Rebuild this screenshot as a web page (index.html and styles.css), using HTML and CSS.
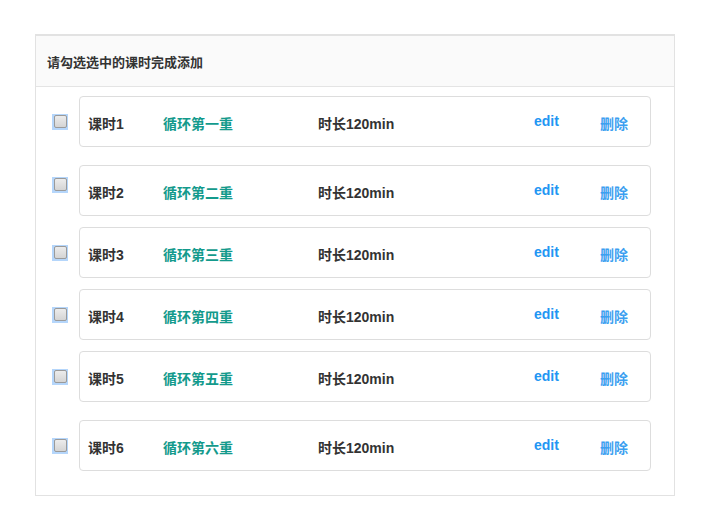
FILE: index.html
```html
<!DOCTYPE html>
<html>
<head>
<meta charset="utf-8">
<link rel="stylesheet" href="styles.css">
</head>
<body>
<div class="panel">
  <div class="panel-heading">请勾选选中的课时完成添加</div>
  <div class="panel-body">
    <div class="row">
      <span class="check"><span class="box"></span></span>
      <div class="card">
        <span class="c-label">课时1</span><span class="c-name">循环第一重</span><span class="c-dur">时长120min</span><a class="c-edit">edit</a><a class="c-del">删除</a>
      </div>
    </div>
    <div class="row spaced">
      <span class="check raised"><span class="box"></span></span>
      <div class="card">
        <span class="c-label">课时2</span><span class="c-name">循环第二重</span><span class="c-dur">时长120min</span><a class="c-edit">edit</a><a class="c-del">删除</a>
      </div>
    </div>
    <div class="row">
      <span class="check"><span class="box"></span></span>
      <div class="card">
        <span class="c-label">课时3</span><span class="c-name">循环第三重</span><span class="c-dur">时长120min</span><a class="c-edit">edit</a><a class="c-del">删除</a>
      </div>
    </div>
    <div class="row">
      <span class="check"><span class="box"></span></span>
      <div class="card">
        <span class="c-label">课时4</span><span class="c-name">循环第四重</span><span class="c-dur">时长120min</span><a class="c-edit">edit</a><a class="c-del">删除</a>
      </div>
    </div>
    <div class="row">
      <span class="check"><span class="box"></span></span>
      <div class="card">
        <span class="c-label">课时5</span><span class="c-name">循环第五重</span><span class="c-dur">时长120min</span><a class="c-edit">edit</a><a class="c-del">删除</a>
      </div>
    </div>
    <div class="row spaced">
      <span class="check"><span class="box"></span></span>
      <div class="card">
        <span class="c-label">课时6</span><span class="c-name">循环第六重</span><span class="c-dur">时长120min</span><a class="c-edit">edit</a><a class="c-del">删除</a>
      </div>
    </div>
  </div>
</div>
</body>
</html>
```
FILE: styles.css
```css
html, body {
  margin: 0;
  padding: 0;
  background: #fff;
}
body {
  font-family: "Liberation Sans", Arial, "Noto Sans CJK SC", sans-serif;
  font-size: 13px;
  font-weight: bold;
  color: #333;
}
.panel {
  margin: 34px 0 0 35px;
  width: 638px;
  height: 459px;
  border: 1px solid #e2e2e2;
  border-top-width: 2px;
}
.panel-heading {
  background: #fafafa;
  border-bottom: 1px solid #e4e4e4;
  padding-left: 11px;
  display: flex;
  align-items: center;
  padding-top: 1px;
  box-sizing: border-box;
  height: 51px;
}
.panel-body {
  padding: 9px 0 0 16px;
}
.row {
  display: flex;
  align-items: center;
  margin-top: 11px;
}
.row:first-child {
  margin-top: 0;
}
.row.spaced {
  margin-top: 18px;
}
.check {
  width: 16px;
  height: 16px;
  background: #b5d6fb;
  display: flex;
  align-items: center;
  justify-content: center;
  margin-right: 11px;
  flex: none;
}
.check.raised {
  margin-bottom: 12px;
}
.box {
  width: 11px;
  height: 11px;
  border: 1px solid #9a9a9a;
  border-radius: 2px;
  background: linear-gradient(#ececec, #d4d4d4);
}
.card {
  border: 1px solid #dddddd;
  border-radius: 4px;
  display: flex;
  align-items: center;
  padding-left: 8px;
  padding-top: 3px;
  width: 562px;
  height: 46px;
  font-size: 14px;
}
.c-label {
  width: 75px;
  color: #333;
}
.c-name {
  width: 155px;
  color: #139a8c;
}
.c-dur {
  width: 216px;
  color: #333;
}
.c-edit {
  width: 66px;
  color: #2196f3;
  position: relative;
  top: -2px;
}
.c-del {
  color: #3c9ff0;
}
```
